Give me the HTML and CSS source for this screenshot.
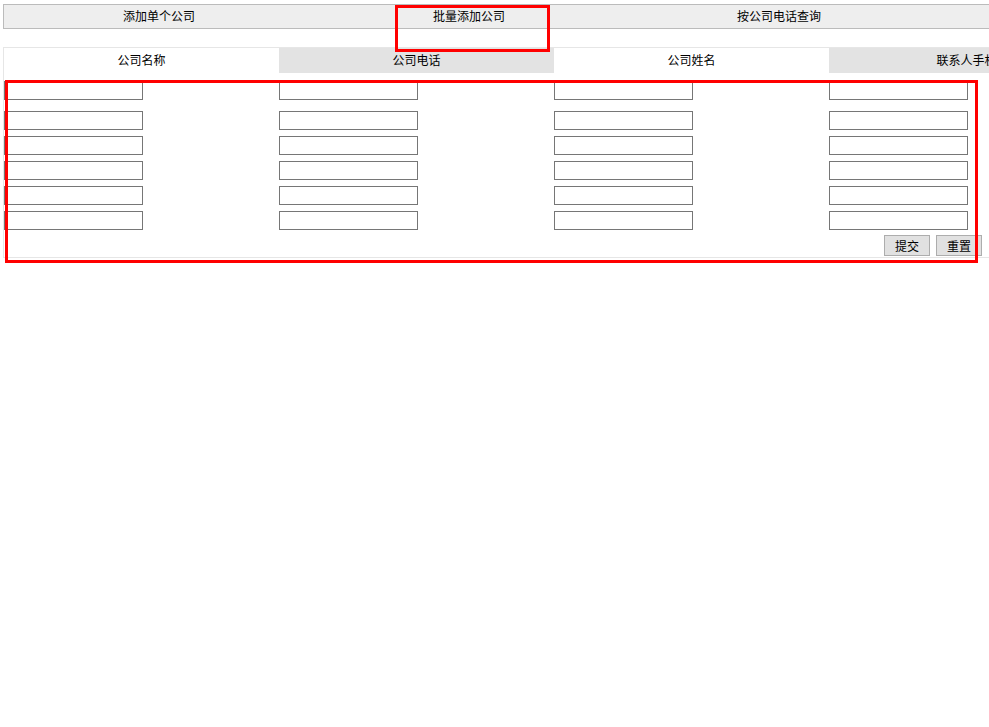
FILE: index.html
```html
<!DOCTYPE html>
<html lang="zh-CN">
<head>
<meta charset="utf-8">
<title>批量添加公司</title>
<link rel="stylesheet" href="styles.css">
</head>
<body>
<div class="page">
  <div class="nav">
    <div class="nav-item">添加单个公司</div>
    <div class="nav-item">批量添加公司</div>
    <div class="nav-item">按公司电话查询</div>
    <div class="nav-item"></div>
  </div>
  <form class="form">
    <div class="head">
      <div class="head-cell">公司名称</div>
      <div class="head-cell alt">公司电话</div>
      <div class="head-cell">公司姓名</div>
      <div class="head-cell alt">联系人手机</div>
    </div>
    <div class="rows">
      <div class="row first">
        <div class="cell"><input type="text"></div>
        <div class="cell"><input type="text"></div>
        <div class="cell"><input type="text"></div>
        <div class="cell"><input type="text"></div>
      </div>
      <div class="row">
        <div class="cell"><input type="text"></div>
        <div class="cell"><input type="text"></div>
        <div class="cell"><input type="text"></div>
        <div class="cell"><input type="text"></div>
      </div>
      <div class="row">
        <div class="cell"><input type="text"></div>
        <div class="cell"><input type="text"></div>
        <div class="cell"><input type="text"></div>
        <div class="cell"><input type="text"></div>
      </div>
      <div class="row">
        <div class="cell"><input type="text"></div>
        <div class="cell"><input type="text"></div>
        <div class="cell"><input type="text"></div>
        <div class="cell"><input type="text"></div>
      </div>
      <div class="row">
        <div class="cell"><input type="text"></div>
        <div class="cell"><input type="text"></div>
        <div class="cell"><input type="text"></div>
        <div class="cell"><input type="text"></div>
      </div>
      <div class="row">
        <div class="cell"><input type="text"></div>
        <div class="cell"><input type="text"></div>
        <div class="cell"><input type="text"></div>
        <div class="cell"><input type="text"></div>
      </div>
    </div>
    <div class="actions">
      <button type="submit" class="btn">提交</button>
      <button type="reset" class="btn">重置</button>
    </div>
  </form>
</div>
<div class="mark mark-nav"></div>
<div class="mark mark-form"></div>
</body>
</html>
```
FILE: styles.css
```css
html, body {
  margin: 0;
  padding: 0;
  background: #fff;
  overflow: hidden;
}
body {
  font-family: "Noto Sans CJK SC", "Noto Sans", sans-serif;
  font-size: 12px;
  color: #000;
}
.page {
  padding: 4px 0 0 3px;
  overflow: hidden;
}
.nav {
  display: flex;
  width: 1240px;
  height: 25px;
  box-sizing: border-box;
  border: 1px solid #bbbbbb;
  border-right: none;
  background: #eeeeee;
}
.nav-item {
  flex: 0 0 310px;
  text-align: center;
  line-height: 21px;
}
.form {
  margin: 18px 0 0 0;
  width: 1240px;
  border-top: 1px solid #e6e6e6;
  border-left: 1px solid #e6e6e6;
  border-bottom: 1px solid #e6e6e6;
  padding-bottom: 1px;
}
.head {
  display: flex;
  height: 25px;
}
.head-cell {
  flex: 0 0 275px;
  text-align: center;
  line-height: 23px;
}
.head-cell.alt {
  background: #e3e3e3;
}
.rows {
  display: flex;
  flex-direction: column;
  gap: 6px;
  padding-top: 8px;
}
.row {
  display: flex;
}
.row.first {
  margin-bottom: 5px;
}
.cell {
  flex: 0 0 275px;
}
.cell input {
  display: block;
  width: 139px;
  height: 19px;
  box-sizing: border-box;
  margin: 0;
  padding: 0 2px;
  border: 1px solid #767676;
  background: #fff;
  font: inherit;
}
.actions {
  display: flex;
  gap: 6px;
  padding-left: 880px;
  margin-top: 5px;
}
.btn {
  width: 46px;
  height: 21px;
  box-sizing: border-box;
  margin: 0;
  padding: 0;
  border: 1px solid #adadad;
  background: #e1e1e1;
  font-family: "Noto Sans CJK SC", sans-serif;
  font-size: 12px;
  color: #000;
  line-height: 19px;
}
.mark {
  position: absolute;
  box-sizing: border-box;
  border: 3px solid #ff0000;
  pointer-events: none;
}
.mark-nav {
  left: 395px;
  top: 5px;
  width: 155px;
  height: 47px;
}
.mark-form {
  left: 5px;
  top: 80px;
  width: 973px;
  height: 183px;
}
```
